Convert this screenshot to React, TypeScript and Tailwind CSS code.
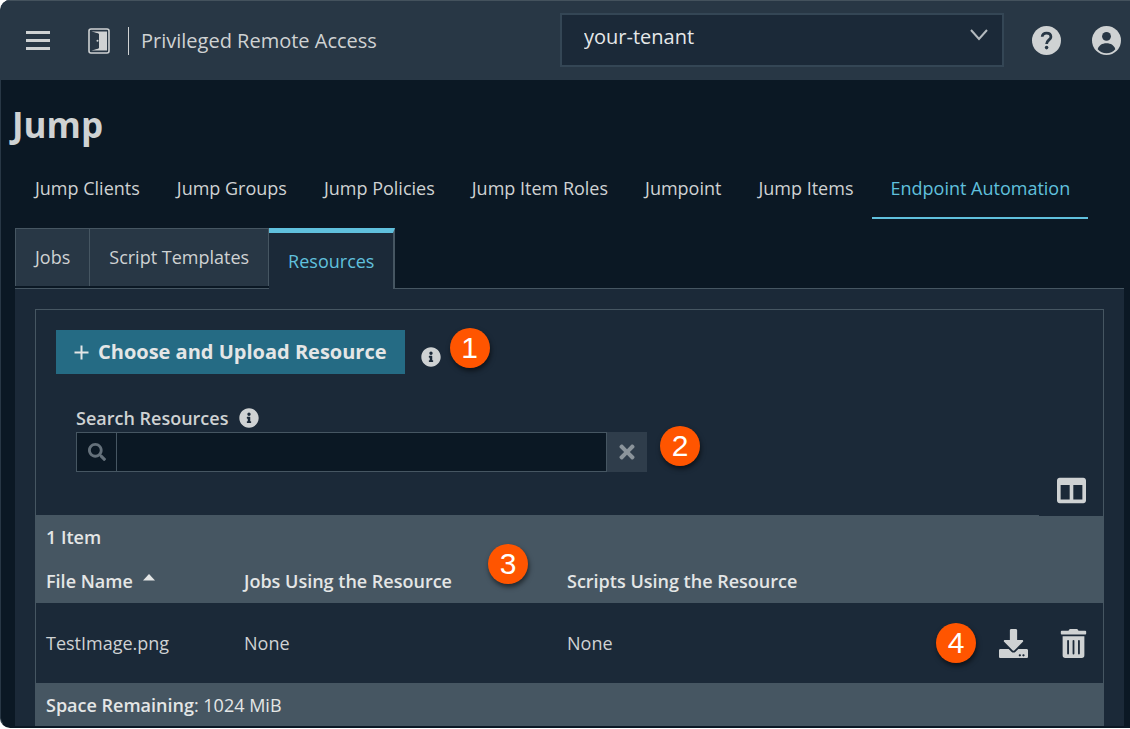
import React, { useState } from 'react';
import {
  FaColumns,
  FaDownload,
  FaInfoCircle,
  FaSearch,
  FaTimes,
  FaTrashAlt,
} from 'react-icons/fa';

const sections = [
  'Jump Clients',
  'Jump Groups',
  'Jump Policies',
  'Jump Item Roles',
  'Jumpoint',
  'Jump Items',
  'Endpoint Automation',
];

const resources = [{ name: 'TestImage.png', jobs: 'None', scripts: 'None' }];

function Marker({ n, className = '' }: { n: number; className?: string }) {
  return (
    <span
      className={`flex size-10 shrink-0 items-center justify-center rounded-full bg-[#ff5500] font-['Liberation_Sans',sans-serif] text-[30px] leading-none text-white shadow-[1px_3px_5px_rgba(0,0,0,0.55)] ${className}`}
    >
      {n}
    </span>
  );
}

function DoorIcon() {
  return (
    <svg width="22" height="26" viewBox="0 0 22 26" fill="none" aria-hidden="true">
      <rect x="1" y="1" width="20" height="24" rx="2" stroke="#cfd2d3" strokeWidth="1.6" />
      <path d="M3.5 3.5H19V22.5H3.5L10.5 20.5V5.5Z" fill="#cfd2d3" />
      <path d="M3.5 4L11 6V20L3.5 22Z" fill="#283745" />
      <circle cx="9.5" cy="12.8" r="1" fill="#cfd2d3" />
    </svg>
  );
}

function HelpIcon() {
  return (
    <svg width="29" height="29" viewBox="0 0 29 29" fill="none" aria-hidden="true">
      <circle cx="14.5" cy="14.5" r="14.5" fill="#cfd2d3" />
      <path
        d="M10.2 10.8C10.2 8.4 12 7.1 14.5 7.1S18.9 8.5 18.9 10.9C18.9 13.8 14.6 14.2 14.6 18"
        stroke="#283745"
        strokeWidth="2.8"
      />
      <circle cx="14.6" cy="21.6" r="1.8" fill="#283745" />
    </svg>
  );
}

function UserIcon() {
  return (
    <svg width="29" height="29" viewBox="0 0 28 28" aria-hidden="true">
      <circle cx="14" cy="14" r="14" fill="#cfd2d3" />
      <circle cx="14" cy="10" r="4.3" fill="#283745" />
      <path d="M5.5 22.4C6.5 18.6 9.8 16.6 14 16.6S21.5 18.6 22.5 22.4C20.4 25 17.4 26.3 14 26.3S7.6 25 5.5 22.4Z" fill="#283745" />
    </svg>
  );
}

function Header() {
  return (
    <header className="flex h-20 items-center border-t border-[#44525d] bg-[#283745] pr-[9px] pl-[25px]">
      <button aria-label="Menu" className="flex w-6 flex-col gap-[5px]">
        <span className="h-[3px] bg-[#cfd2d3]" />
        <span className="h-[3px] bg-[#cfd2d3]" />
        <span className="h-[3px] bg-[#cfd2d3]" />
      </button>
      <a href="#" className="ml-[38px] flex items-center">
        <DoorIcon />
        <span className="ml-[18px] flex h-7 items-center border-l border-[#cfd2d3] pl-3 text-xl whitespace-nowrap">
          Privileged Remote Access
        </span>
      </a>
      <div className="relative mb-0.5 ml-auto w-[444px]">
        <select
          aria-label="Tenant"
          className="h-[54px] w-full appearance-none border-2 border-[#344655] bg-[#1b2938] pb-1.5 pl-[22px] text-xl font-medium text-[#e6e8e9]"
        >
          <option>your-tenant</option>
        </select>
        <svg
          className="pointer-events-none absolute top-4 right-4"
          width="18"
          height="12"
          viewBox="0 0 18 12"
          fill="none"
          stroke="#b4babf"
          strokeWidth="2"
        >
          <path d="M1 1L9 10L17 1" />
        </svg>
      </div>
      <button aria-label="Help" className="ml-7">
        <HelpIcon />
      </button>
      <button aria-label="Account" className="ml-[31px]">
        <UserIcon />
      </button>
    </header>
  );
}

function SearchBar() {
  const [query, setQuery] = useState('');

  return (
    <div className="px-5">
      <div className="flex items-center gap-[11px]">
        <label htmlFor="search" className="text-lg leading-7 font-semibold">
          Search Resources
        </label>
        <FaInfoCircle size={20} />
      </div>
      <div className="flex items-center">
        <div className="flex h-10 w-[531px] border border-[#465662] bg-[#0b1824]">
          <span className="flex w-10 items-center justify-center border-r border-[#465662] text-[#65717b]">
            <FaSearch size={18} />
          </span>
          <input
            id="search"
            value={query}
            onChange={(e) => setQuery(e.target.value)}
            className="min-w-0 flex-1 bg-transparent px-2 text-lg outline-none"
          />
        </div>
        <button
          aria-label="Clear search"
          onClick={() => setQuery('')}
          className="flex size-10 items-center justify-center bg-[#2f3d4b] text-[#8b949b]"
        >
          <FaTimes size={22} />
        </button>
        <Marker n={2} className="-mt-3 ml-[13px]" />
      </div>
    </div>
  );
}

function ResourceTable() {
  return (
    <div className="relative">
      <table className="w-full text-left text-lg">
        <caption className="h-11 bg-[#465662] px-2.5 text-left leading-[44px] font-semibold text-[#e4e6e6]">
          1 Item
        </caption>
        <thead>
          <tr className="h-11 bg-[#465662] text-[#e4e6e6]">
            <th className="w-[198px] px-2.5 font-semibold">
              <button className="flex items-center gap-2.5 font-semibold">
                File Name
                <svg width="12" height="7" viewBox="0 0 12 7" className="mb-2" fill="currentColor">
                  <path d="M6 0L12 6.5H0Z" />
                </svg>
              </button>
            </th>
            <th className="w-[323px] px-2.5 font-semibold">Jobs Using the Resource</th>
            <th className="px-2.5 font-semibold">Scripts Using the Resource</th>
            <th aria-label="Actions" />
          </tr>
        </thead>
        <tbody>
          {resources.map((r) => (
            <tr key={r.name} className="h-20">
              <td className="px-2.5">{r.name}</td>
              <td className="px-2.5">{r.jobs}</td>
              <td className="px-2.5">{r.scripts}</td>
              <td className="pr-[15px]">
                <div className="flex items-center justify-end">
                  <Marker n={4} />
                  <button aria-label="Download" className="ml-[23px]">
                    <FaDownload size={29} />
                  </button>
                  <button aria-label="Delete" className="ml-[31px]">
                    <FaTrashAlt size={29} />
                  </button>
                </div>
              </td>
            </tr>
          ))}
        </tbody>
      </table>
      <Marker n={3} className="absolute top-[29px] left-[452px]" />
      <p className="h-[43px] bg-[#465662] px-2.5 text-lg leading-[44px] text-[#e4e6e6]">
        <strong className="font-semibold">Space Remaining</strong>: 1024 MiB
      </p>
    </div>
  );
}

export default function App() {
  return (
    <div className="bg-white font-['Open_Sans',sans-serif] text-[#cfd2d3]">
      <div className="overflow-hidden rounded-l-[10px] border-b-2 border-l border-b-[#0b1824] border-l-[#283745] bg-[#0b1824]">
        <Header />
        <h1 className="mt-5 pl-[11px] text-[35px] leading-[50px] font-bold">Jump</h1>
        <nav className="mt-2 flex gap-px pl-4">
          {sections.map((s) => (
            <a
              key={s}
              href="#"
              className={`px-[18px] pt-4 pb-[15px] text-lg leading-7 whitespace-nowrap ${
                s === 'Endpoint Automation'
                  ? 'border-b-2 border-[#60c0dd] text-[#60c0dd]'
                  : ''
              }`}
            >
              {s}
            </a>
          ))}
        </nav>
        <main className="mt-[9px] pr-1.5 pl-3.5">
          <div role="tablist" className="flex items-start text-lg">
            <button
              role="tab"
              aria-selected="false"
              className="h-[58px] border-t border-l border-[#465662] bg-[#283745] px-[19px] pb-0.5"
            >
              Jobs
            </button>
            <button
              role="tab"
              aria-selected="false"
              className="h-[58px] border-x border-t border-[#465662] bg-[#283745] px-[19px] pb-0.5"
            >
              Script Templates
            </button>
            <button
              role="tab"
              aria-selected="true"
              className="relative z-10 -mb-px h-[61px] border-t-[5px] border-r-2 border-t-[#60c0dd] border-r-[#465662] bg-[#1b2938] px-[19px] text-[#60c0dd]"
            >
              Resources
            </button>
          </div>
          <div className="border-t border-[#465662] bg-[#1b2938] px-5 pt-5">
            <div className="border border-b-0 border-[#465662]">
              <div className="flex items-center px-5 pt-5">
                <button className="flex h-11 items-center bg-[#256b84] px-[18px] text-xl font-bold text-[#e4e6e6]">
                  <svg
                    width="15"
                    height="15"
                    viewBox="0 0 15 15"
                    className="mr-[9px]"
                    stroke="currentColor"
                    strokeWidth="2"
                    aria-hidden="true"
                  >
                    <path d="M7.5 0.5V14.5M0.5 7.5H14.5" />
                  </svg>
                  Choose and Upload Resource
                </button>
                <FaInfoCircle size={20} className="mt-2.5 ml-4" />
                <Marker n={1} className="-mt-2 ml-[9px]" />
              </div>
              <div className="mt-[30px] px-5">
                <SearchBar />
              </div>
              <div className="flex h-[43px] items-start justify-end">
                <button
                  aria-label="Select columns"
                  className="relative z-10 flex h-11 w-16 items-start justify-center bg-[#1b2938] pt-1"
                >
                  <FaColumns size={29} />
                </button>
              </div>
              <ResourceTable />
            </div>
          </div>
        </main>
      </div>
    </div>
  );
}
